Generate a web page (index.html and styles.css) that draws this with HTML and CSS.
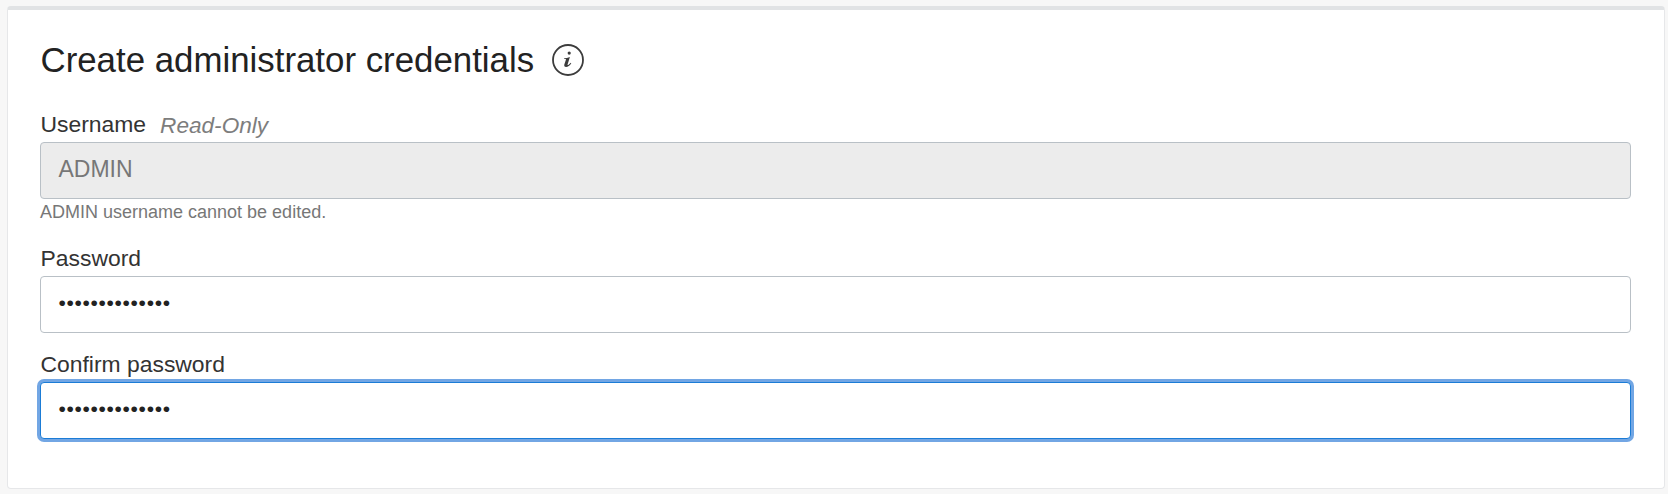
FILE: index.html
```html
<!DOCTYPE html>
<html lang="en">
<head>
<meta charset="utf-8">
<title>Create administrator credentials</title>
<link rel="stylesheet" href="styles.css">
</head>
<body>
<section class="card">
  <header class="card-header">
    <h2 class="title">Create administrator credentials</h2>
    <svg class="info" viewBox="0 0 34 34" role="img" aria-label="Information">
      <circle cx="17" cy="17" r="15" fill="none" stroke="#3c3c3c" stroke-width="1.8"/>
      <circle cx="18.2" cy="10.1" r="1.6" fill="#3c3c3c"/>
      <path d="M13.2 15.2C14.9 15 16.8 14.7 18.9 13.9L16.6 21.4C16.3 22.6 17.4 22.4 19.7 19.7L20.3 20.2C18.6 22.8 16.9 24 15.1 24C13.4 24 12.9 22.9 13.4 21.3L15 16.4C15.1 15.9 14.3 15.9 13.1 15.9Z" fill="#3c3c3c"/>
    </svg>
  </header>
  <div class="field">
    <div class="label-row">
      <label class="label" for="username">Username</label>
      <span class="hint">Read-Only</span>
    </div>
    <div class="input input-readonly" id="username">ADMIN</div>
    <p class="help">ADMIN username cannot be edited.</p>
  </div>
  <div class="field field-password">
    <div class="label-row"><label class="label" for="password">Password</label></div>
    <div class="input input-masked" id="password">••••••••••••••</div>
  </div>
  <div class="field field-confirm">
    <div class="label-row"><label class="label" for="confirm">Confirm password</label></div>
    <div class="input input-masked input-focused" id="confirm">••••••••••••••</div>
  </div>
</section>
</body>
</html>
```
FILE: styles.css
```css
* {
  box-sizing: border-box;
}

body {
  margin: 0;
  height: 494px;
  padding: 6px 3px 5px 7px;
  overflow: hidden;
  background: #f7f7f7;
  color: #222;
  font-family: "Liberation Sans", Arial, sans-serif;
}

.card {
  height: 483px;
  padding: 30px 33px 0 32px;
  border: 1px solid #e6e7e9;
  border-top: 4px solid #e1e3e5;
  border-radius: 4px;
  background: #fff;
}

.card-header {
  display: flex;
  align-items: center;
  gap: 17px;
  height: 40px;
}

.title {
  margin: 0;
  padding-left: 0.5px;
  font-size: 34.85px;
  font-weight: 400;
  line-height: 40px;
}

.info {
  width: 34px;
  height: 34px;
}

.field {
  margin-top: 31px;
}

.label-row {
  display: flex;
  align-items: baseline;
  gap: 14px;
  height: 31px;
  padding-left: 0.5px;
  font-size: 22.9px;
  line-height: 26px;
}

.label {
  color: #333;
}

.hint {
  padding-top: 1px;
  color: #7d7d7d;
  font-size: 22.6px;
  font-style: italic;
  transform: translateY(1px);
}

.input {
  height: 57px;
  padding: 0 17.5px;
  border: 1px solid #b9c0c6;
  border-radius: 4px;
  background: #fff;
  font-size: 23px;
  line-height: 53px;
}

.input-readonly {
  background: #ececec;
  color: #777;
}

.input-masked {
  font-size: 21px;
  letter-spacing: 0.66px;
  line-height: 52px;
}

.input-focused {
  border-color: #1b7cd6;
  box-shadow: 0 0 0 3px #72a6e4;
}

.help {
  margin: 3px 0 0;
  color: #777;
  font-size: 18px;
  line-height: 20px;
}

.field-password {
  margin-top: 23px;
}

.field-confirm {
  margin-top: 18px;
}
```
